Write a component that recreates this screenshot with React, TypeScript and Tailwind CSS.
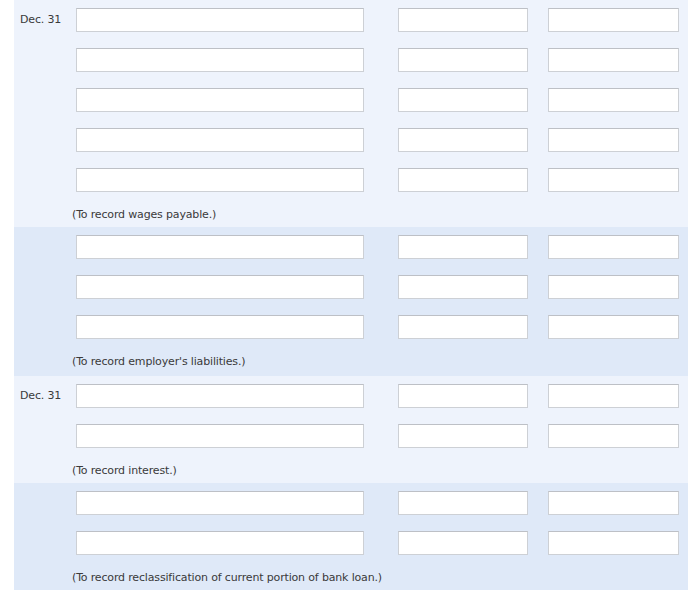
const sections = [
  { date: "Dec. 31", rows: 5, note: "(To record wages payable.)", bg: "bg-[#eef3fc]" },
  { date: "", rows: 3, note: "(To record employer's liabilities.)", bg: "bg-[#dfe9f8]" },
  { date: "Dec. 31", rows: 2, note: "(To record interest.)", bg: "bg-[#eef3fc]" },
  { date: "", rows: 2, note: "(To record reclassification of current portion of bank loan.)", bg: "bg-[#dfe9f8]" },
];

function Box({ w }: { w: string }) {
  return (
    <input
      type="text"
      className={`${w} h-[24px] bg-white border border-[#cdd0d5] border-t-[#bdc0c6] outline-none`}
    />
  );
}

export default function App() {
  return (
    <div
      className="w-[700px] h-[592px] overflow-hidden bg-white pl-[14px] pr-[12px] text-[11px] tracking-[-0.16px] text-[#3a3a3a]"
      style={{ fontFamily: '"DejaVu Sans", Verdana, sans-serif' }}
    >
      {sections.map((s, si) => (
        <div key={si} className={`${s.bg} ${si === 1 ? "h-[149px]" : si === 2 ? "h-[107px]" : ""}`}>
          {Array.from({ length: s.rows }).map((_, ri) => (
            <div key={ri} className="flex items-center h-[40px]">
              <div className="w-[62px] pl-[6px] whitespace-nowrap">{ri === 0 ? s.date : ""}</div>
              <Box w="w-[288px]" />
              <div className="w-[34px]" />
              <Box w="w-[130px]" />
              <div className="w-[20px]" />
              <Box w="w-[131px]" />
            </div>
          ))}
          <div className="h-[27px] flex items-center pl-[58px] pt-[3px]">{s.note}</div>
        </div>
      ))}
    </div>
  );
}
